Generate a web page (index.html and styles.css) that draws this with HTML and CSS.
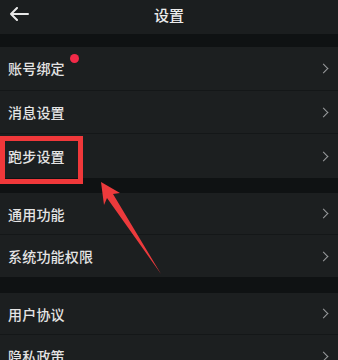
FILE: index.html
```html
<!DOCTYPE html>
<html lang="zh">
<head>
<meta charset="utf-8">
<link rel="stylesheet" href="styles.css">
</head>
<body>
<div class="page">
  <header class="topbar">
    <svg class="back" width="20" height="14" viewBox="0 0 20 14"><path d="M19 7H2M8 1L2 7l6 6" fill="none" stroke="#e8e8e8" stroke-width="2" stroke-linecap="round" stroke-linejoin="round"/></svg>
    <div class="title">设置</div>
  </header>
  <div class="gap g1"></div>
  <section class="group tall">
    <div class="row"><span class="label">账号绑定<i class="dot"></i></span><span class="chev"></span></div>
    <div class="row"><span class="label">消息设置</span><span class="chev"></span></div>
    <div class="row"><span class="label">跑步设置</span><span class="chev"></span></div>
  </section>
  <div class="gap g2"></div>
  <section class="group">
    <div class="row"><span class="label">通用功能</span><span class="chev"></span></div>
    <div class="row"><span class="label">系统功能权限</span><span class="chev"></span></div>
  </section>
  <div class="gap g3"></div>
  <section class="group">
    <div class="row"><span class="label">用户协议</span><span class="chev"></span></div>
    <div class="row"><span class="label">隐私政策</span><span class="chev"></span></div>
  </section>
  <div class="highlight"></div>
  <svg class="arrow" width="338" height="360" viewBox="0 0 338 360"><polygon points="101,182 120,193 113,194 161,274 107,198 104,205" fill="#ec3a3c"/></svg>
</div>
</body>
</html>
```
FILE: styles.css
```css
* { box-sizing: border-box; margin: 0; padding: 0; }
html, body { width: 338px; height: 360px; overflow: hidden; background: #0f1213; }
body { font-family: "Noto Sans CJK SC", "Noto Sans", sans-serif; color: #e4e4e4; }
.page { position: relative; width: 338px; height: 360px; }
.topbar { height: 34px; background: #1b1e1f; display: flex; align-items: center; justify-content: center; position: relative; }
.back { position: absolute; left: 9px; top: 7px; }
.title { font-size: 15px; font-weight: 500; color: #ececec; margin-top: -6px; }
.gap { background: #0f1213; }
.g1 { height: 13px; }
.g2 { height: 15px; }
.g3 { height: 16px; }
.group { background: #1c1f20; }
.row { height: 42px; display: flex; align-items: center; justify-content: space-between; padding: 0 10px 0 8px; border-bottom: 1px solid #141718; }
.tall .row { height: 43.7px; }
.row:last-child { border-bottom: none; }
.label { font-size: 14px; font-weight: 500; line-height: 1; position: relative; letter-spacing: 0.2px; }
.dot { position: absolute; right: -14px; top: -7px; width: 9px; height: 9px; border-radius: 50%; background: #f22a48; }
.chev { width: 7px; height: 7px; border-right: 1.6px solid #9a9c9d; border-top: 1.6px solid #9a9c9d; transform: rotate(45deg); margin-right: 1px; }
.highlight { position: absolute; left: 0; top: 136px; width: 83px; height: 48px; border: 5px solid #f0383a; }
.arrow { position: absolute; left: 0; top: 0; }
```
